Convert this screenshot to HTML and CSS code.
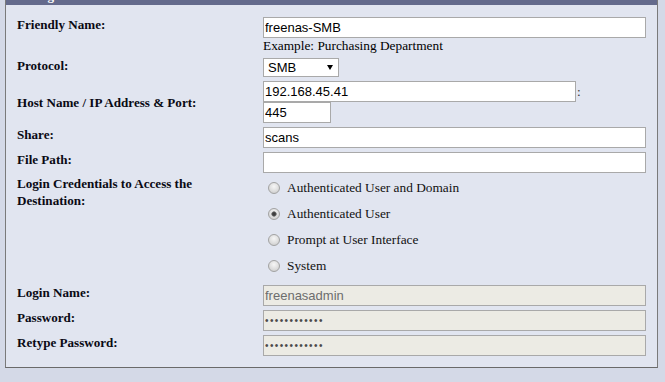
FILE: index.html
```html
<!DOCTYPE html>
<html>
<head>
<meta charset="utf-8">
<title>Destination Settings</title>
<link rel="stylesheet" href="styles.css">
</head>
<body>
<div class="panel">
  <div class="panel-head"><span class="panel-title">Settings</span></div>
  <div class="form">
    <div class="row">
      <div class="lbl">Friendly Name:</div>
      <div class="val">
        <input class="txt full" type="text" value="freenas-SMB">
        <div class="hint">Example: Purchasing Department</div>
      </div>
    </div>
    <div class="row">
      <div class="lbl">Protocol:</div>
      <div class="val">
        <div class="selwrap">
          <select class="sel"><option>SMB</option><option>FTP</option></select>
        </div>
      </div>
    </div>
    <div class="row">
      <div class="lbl mid">Host Name / IP Address &amp; Port:</div>
      <div class="val">
        <div class="ipline"><input class="txt ip" type="text" value="192.168.45.41"><span class="colon">:</span></div>
        <input class="txt port" type="text" value="445">
      </div>
    </div>
    <div class="row">
      <div class="lbl">Share:</div>
      <div class="val"><input class="txt full" type="text" value="scans"></div>
    </div>
    <div class="row">
      <div class="lbl">File Path:</div>
      <div class="val"><input class="txt full" type="text" value=""></div>
    </div>
    <div class="row">
      <div class="lbl cred">Login Credentials to Access the Destination:</div>
      <div class="val">
        <div class="radios">
          <label class="opt"><input class="radio" type="radio" name="cred"><span>Authenticated User and Domain</span></label>
          <label class="opt"><input class="radio" type="radio" name="cred" checked><span>Authenticated User</span></label>
          <label class="opt"><input class="radio" type="radio" name="cred"><span>Prompt at User Interface</span></label>
          <label class="opt"><input class="radio" type="radio" name="cred"><span>System</span></label>
        </div>
      </div>
    </div>
    <div class="row">
      <div class="lbl">Login Name:</div>
      <div class="val"><input class="txt full ro" type="text" value="freenasadmin" readonly></div>
    </div>
    <div class="row">
      <div class="lbl">Password:</div>
      <div class="val"><input class="txt full ro pw" type="password" value="freenas12345" readonly></div>
    </div>
    <div class="row">
      <div class="lbl">Retype Password:</div>
      <div class="val"><input class="txt full ro pw" type="password" value="freenas12345" readonly></div>
    </div>
  </div>
</div>
</body>
</html>
```
FILE: styles.css
```css
html, body {
  margin: 0;
  padding: 0;
}
body {
  background: #d4d9e7;
  font-family: "Liberation Serif", "Times New Roman", serif;
  color: #000;
  height: 382px;
  overflow: hidden;
}
.panel {
  margin-left: 5px;
  width: 651px;
  background: #e1e5f0;
  border-left: 1px solid #7a7a7a;
  border-right: 1px solid #7a7a7a;
  border-bottom: 1px solid #6a6a6a;
}
.panel-head {
  height: 5px;
  overflow: hidden;
  background: #646a8c;
}
.panel-title {
  display: block;
  margin-top: -12px;
  padding-left: 9px;
  line-height: 15px;
  font-size: 13px;
  font-weight: bold;
  color: #fff;
}
.form {
  padding: 12px 10px 11px 11px;
}
.row {
  display: grid;
  grid-template-columns: 246px 383px;
  align-items: start;
  margin-top: 4px;
}
.row:first-child {
  margin-top: 0;
}
.lbl {
  font-size: 13.1px;
  font-weight: bold;
  line-height: 15px;
  color: #0a0a14;
}
.lbl.mid {
  align-self: center;
}
.lbl.cred {
  line-height: 17px;
  margin-top: -2px;
  padding-right: 40px;
}
.val {
  font-size: 13.33px;
}
.txt {
  box-sizing: border-box;
  display: block;
  height: 21px;
  margin: 0;
  padding: 0 1px;
  border: 1px solid #a9a9a9;
  border-radius: 0;
  background: #fff;
  color: #000;
  font-family: "Liberation Sans", Arial, sans-serif;
  font-size: 13px;
  outline: none;
}
.full {
  width: 383px;
}
.ip {
  width: 313px;
}
.port {
  width: 68px;
}
.ro {
  background: #ecebe4;
  color: #6d6d6d;
}
.pw {
  font-size: 10px;
  letter-spacing: 1.4px;
  color: #4a4a4a;
}
.hint {
  line-height: 16px;
  font-size: 13.33px;
}
.ipline {
  display: flex;
  align-items: baseline;
}
.colon {
  font-size: 13.33px;
  color: #333;
  padding-left: 1px;
}
.selwrap {
  position: relative;
  width: 76px;
  height: 19px;
}
.sel {
  appearance: none;
  -webkit-appearance: none;
  box-sizing: border-box;
  width: 76px;
  height: 19px;
  margin: 0;
  padding: 0 0 0 4px;
  border: 1px solid #a9a9a9;
  border-radius: 0;
  background: #fff;
  color: #000;
  font-family: "Liberation Sans", Arial, sans-serif;
  font-size: 13px;
  outline: none;
}
.selwrap::after {
  content: "";
  position: absolute;
  left: 64px;
  top: 7px;
  border-left: 3px solid transparent;
  border-right: 3px solid transparent;
  border-top: 5px solid #000;
  pointer-events: none;
}
.radios {
  display: flex;
  flex-direction: column;
  gap: 10px;
  padding: 3px 0 7px 5px;
}
.opt {
  display: flex;
  align-items: center;
  height: 16px;
  line-height: 16px;
  font-size: 13.33px;
  color: #111;
}
.radio {
  appearance: none;
  -webkit-appearance: none;
  box-sizing: border-box;
  width: 12px;
  height: 12px;
  margin: 0 7px 0 0;
  border-radius: 50%;
  border: 1px solid #a2a2a2;
  background: radial-gradient(circle at 50% 35%, #f6f6f6 0, #dedede 55%, #c6c6c6 100%);
}
.radio:checked {
  background:
    radial-gradient(circle at 50% 50%, #333 0, #4a4a4a 1.6px, #808080 2.4px, rgba(0,0,0,0) 3px),
    radial-gradient(circle at 50% 35%, #f6f6f6 0, #dedede 55%, #c6c6c6 100%);
}
```
